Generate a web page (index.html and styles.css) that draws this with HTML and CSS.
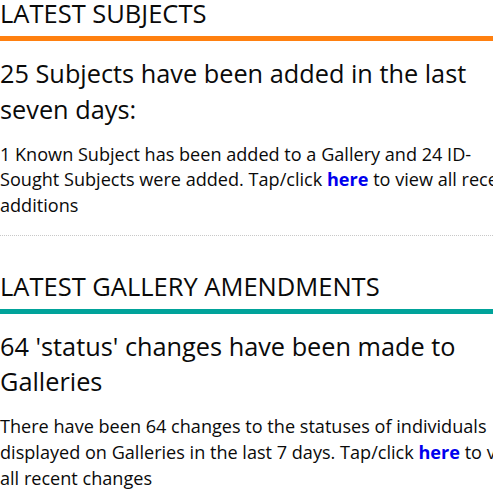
FILE: index.html
```html
<!DOCTYPE html>
<html lang="en">
<head>
<meta charset="utf-8">
<title>Latest</title>
<link rel="stylesheet" href="styles.css">
</head>
<body>
<div class="page">
  <section class="block block-subjects">
    <h2 class="block-title">LATEST SUBJECTS</h2>
    <h3 class="block-lead">25 Subjects have been added in the last seven days:</h3>
    <p class="block-text">1 Known Subject has been added to a Gallery and 24 ID-<br>Sought Subjects were added. Tap/click <a href="#" class="link">here</a> to view all recent<br>additions</p>
  </section>
  <section class="block block-gallery">
    <h2 class="block-title">LATEST GALLERY AMENDMENTS</h2>
    <h3 class="block-lead">64 'status' changes have been made to Galleries</h3>
    <p class="block-text">There have been 64 changes to the statuses of individuals<br>displayed on Galleries in the last 7 days. Tap/click <a href="#" class="link">here</a> to view<br>all recent changes</p>
  </section>
</div>
</body>
</html>
```

FILE: styles.css
```css
html, body {
  margin: 0;
  padding: 0;
  overflow: hidden;
  background: #fff;
}
body {
  font-family: "Open Sans", "Noto Sans", sans-serif;
  color: #0a0a0a;
}
.page {
  width: 515px;
}
.block-title {
  margin: 0;
  font-size: 25.5px;
  font-weight: 400;
  line-height: 27px;
  padding-bottom: 9px;
  border-bottom: 5px solid #ff8010;
}
.block-gallery .block-title {
  border-bottom-color: #00a39a;
}
.block-lead {
  margin: 15px 0 0;
  font-size: 25.3px;
  font-weight: 400;
  line-height: 35.5px;
}
.block-text {
  margin: 14.5px 0 0;
  font-size: 18.1px;
  line-height: 25.8px;
  white-space: nowrap;
}
.block-subjects {
  padding-bottom: 16px;
  border-bottom: 1px dotted #c8c8c8;
}
.block-gallery {
  margin-top: 37px;
}
.link {
  color: #0000ee;
  font-weight: 700;
  text-decoration: none;
}
```
